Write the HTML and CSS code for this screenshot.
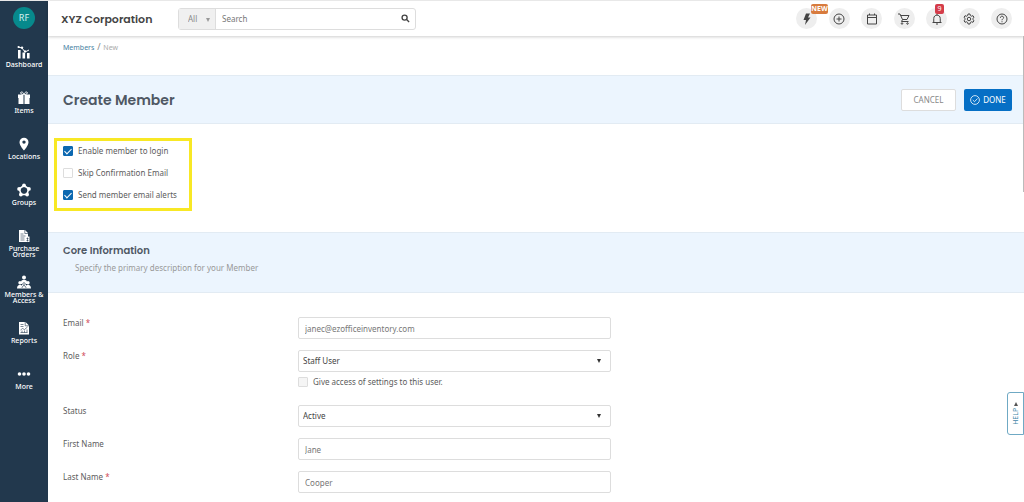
FILE: index.html
```html
<!DOCTYPE html>
<html lang="en">
<head>
    <meta charset="UTF-8">
    <meta name="viewport" content="width=device-width, initial-scale=1.0">
    <title>Create Member</title>
    <link rel="stylesheet" href="styles.css">
</head>
<body>
    <nav class="sidebar">
        <a href="#" class="avatar">RF</a>
        <a href="#" class="nav-item">
            <svg viewBox="0 0 14 14"><path d="M1 2l4 1 3 4 4-2" fill="none" stroke="currentColor"/><circle cx="1.6" cy="2" r="1.1"/><circle cx="5" cy="2.6" r="1.2"/><circle cx="8" cy="6.4" r="1.1"/><path d="M1 5h2.6v8.500H1zM5.500 7.500h2.600v6H5.500zM10 8h2.600v5.500H10z"/></svg>
            Dashboard
        </a>
        <a href="#" class="nav-item">
            <svg viewBox="0 0 14 14"><path d="M1 3.500h5.500V7H1zM7.500 3.500H13V7H7.500zM1.500 7h5v6h-5zM7.500 7h5v6h-5z"/><path d="M6.800 3.500C3 3.500 3 1 4.500 1S6.800 2.500 7 3.500C7.200 2.500 8 1 9.500 1S11 3.500 7.200 3.500" fill="none" stroke="currentColor"/></svg>
            Items
        </a>
        <a href="#" class="nav-item">
            <svg viewBox="0 0 14 14"><path fill-rule="evenodd" d="M7 .7a4.500 4.500 0 0 0-4.500 4.500C2.500 8.500 7 13.500 7 13.500s4.500-5 4.500-8.300A4.500 4.500 0 0 0 7 .7zm0 2.700a1.700 1.700 0 1 1 0 3.400 1.700 1.700 0 0 1 0-3.400z"/></svg>
            Locations
        </a>
        <a href="#" class="nav-item">
            <svg viewBox="0 0 14 14"><path d="M7 2.500l4.700 3.400-1.800 5.600H4.100L2.300 5.900z" fill="none" stroke="currentColor" stroke-width="1.600"/><circle cx="7" cy="2.400" r="1.900"/><circle cx="11.900" cy="5.900" r="1.900"/><circle cx="10.100" cy="11.500" r="1.900"/><circle cx="3.900" cy="11.500" r="1.900"/><circle cx="2.100" cy="5.900" r="1.900"/></svg>
            Groups
        </a>
        <a href="#" class="nav-item">
            <svg viewBox="0 0 14 14"><path d="M2 1h6l3 3v3.500h1.500V13H2z"/><path d="M7.800 1v3.500H11M3.500 5h3M3.500 7h5M3.500 9h4M3.500 11h4M10.500 8.500v4M9.500 9.500h2M9.500 11.500h2" class="ink"/></svg>
            Purchase Orders
        </a>
        <a href="#" class="nav-item">
            <svg viewBox="0 0 14 14"><circle cx="7" cy="2.400" r="2"/><path d="M4 9V7c0-3 6-3 6 0v2z"/><circle cx="3" cy="7.800" r="1.700"/><circle cx="11" cy="7.800" r="1.700"/><path d="M0 13.500c0-5 6-5 6 0zM8 13.500c0-5 6-5 6 0zM5 13.500V9h4v4.500z"/><circle cx="7" cy="9" r="1.300" class="ink"/><path d="M5 13c0-3 4-3 4 0" class="ink"/></svg>
            Members &amp; Access
        </a>
        <a href="#" class="nav-item">
            <svg viewBox="0 0 14 14"><path d="M2 1h6.500L12 4.500V13.500H2z"/><path d="M8.200 1v3.800H12M3.500 3.500h3M3.500 5.500h3M3.500 9l2-1.500 2 1L10.500 6M3.500 11.500h7M5 9.500v2M7.500 9.500v2M10 8.500v3" class="ink"/></svg>
            Reports
        </a>
        <a href="#" class="nav-item">
            <svg viewBox="0 0 14 14"><circle cx="2.500" cy="7" r="1.800"/><circle cx="7" cy="7" r="1.800"/><circle cx="11.500" cy="7" r="1.800"/></svg>
            More
        </a>
    </nav>

    <div class="page">
        <header class="topbar">
            <div class="company">XYZ Corporation</div>
            <form class="search">
                <span class="select scope">
                    <select aria-label="Search in"><option>All</option></select>
                </span>
                <input type="search" placeholder="Search" aria-label="Search">
                <button type="submit" aria-label="Go">
                    <svg viewBox="0 0 10 10"><circle cx="4" cy="4" r="2.800"/><path d="M6.200 6.200L9 9"/></svg>
                </button>
            </form>
            <div class="tools">
                <button type="button" aria-label="What's new"><svg viewBox="0 0 24 24"><path d="M10 1h8l-4 8h5L8 24l2-10H5z" fill="currentColor" stroke="none"/></svg><span class="badge new">NEW</span></button>
                <button type="button" aria-label="Add"><svg viewBox="0 0 24 24"><circle cx="12" cy="12" r="10"/><path d="M12 7v10M7 12h10"/></svg></button>
                <button type="button" aria-label="Calendar"><svg viewBox="0 0 24 24"><path d="M3 4h18v18H3zM3 9h18M7 1v3M17 1v3"/></svg></button>
                <button type="button" aria-label="Cart"><svg viewBox="0 0 24 24"><path d="M0 2h4l5 11h9l4-8H5.500M9 13l-2 4h14"/><circle cx="8" cy="21" r="1.500"/><circle cx="19" cy="21" r="1.500"/></svg></button>
                <button type="button" aria-label="Notifications"><svg viewBox="0 0 24 24"><path d="M3 19h18M5.500 19v-8c0-9 13-9 13 0v8M12 2v2M10 22h4"/></svg><span class="badge count">9</span></button>
                <button type="button" aria-label="Settings"><svg viewBox="0 0 24 24"><path d="M10 2h4l.6 3 2.400 1.400 3-1 2 3.400L19.700 11v2l2.300 2.200-2 3.400-3-1-2.400 1.400-.6 3h-4l-.6-3L7 17.600l-3 1-2-3.400L4.300 13v-2L2 8.800l2-3.400 3 1L9.400 5z"/><circle cx="12" cy="12" r="3.500"/></svg></button>
                <button type="button" aria-label="Help"><svg viewBox="0 0 24 24"><circle cx="12" cy="12" r="10"/><path d="M8.800 9.500c0-4.500 6.400-4 6.400-.3 0 2.500-3.200 2.600-3.200 5.300M12 16.500v2"/></svg></button>
            </div>
        </header>

        <main>
            <div class="breadcrumb"><a href="#">Members</a> <span>/</span> New</div>

            <form id="memberForm">
                <div class="band title-band">
                    <h1>Create Member</h1>
                    <button type="button" class="btn cancel-btn">CANCEL</button>
                    <button type="submit" class="btn done-btn">
                        <svg viewBox="0 0 10 10"><circle cx="5" cy="5" r="4.400"/><path d="M2.800 5l1.700 1.700 3-3.200"/></svg>
                        DONE
                    </button>
                </div>

                <div class="options">
                    <label class="check"><input type="checkbox" checked> Enable member to login</label>
                    <label class="check"><input type="checkbox"> Skip Confirmation Email</label>
                    <label class="check"><input type="checkbox" checked> Send member email alerts</label>
                </div>

                <div class="band section-band">
                    <h2>Core Information</h2>
                    <p>Specify the primary description for your Member</p>
                </div>

                <div class="fields">
                    <div class="form-group">
                        <label for="email">Email <span class="required">*</span></label>
                        <input type="email" id="email" value="janec@ezofficeinventory.com">
                    </div>
                    <div class="form-group">
                        <label for="role">Role <span class="required">*</span></label>
                        <div>
                            <span class="select"><select id="role"><option>Staff User</option></select></span>
                            <label class="check settings"><input type="checkbox" disabled> Give access of settings to this user.</label>
                        </div>
                    </div>
                    <div class="form-group">
                        <label for="status">Status</label>
                        <span class="select"><select id="status"><option>Active</option></select></span>
                    </div>
                    <div class="form-group">
                        <label for="firstName">First Name</label>
                        <input type="text" id="firstName" value="Jane">
                    </div>
                    <div class="form-group">
                        <label for="lastName">Last Name <span class="required">*</span></label>
                        <input type="text" id="lastName" value="Cooper">
                    </div>
                </div>
            </form>
        </main>
    </div>

    <div class="scroll-thumb"></div>
    <button type="button" class="help-tab">HELP <svg viewBox="0 0 4 4"><path d="M0 4l2-4 2 4z"/></svg></button>
</body>
</html>
```
FILE: styles.css
```css
* {
    box-sizing: border-box;
}

body {
    display: flex;
    min-height: 100vh;
    margin: 0;
    border-top: 1px solid #e8e8e8;
    background-color: #fff;
    color: #5c5c5c;
    font-family: "Noto Sans", sans-serif;
    font-size: 8px;
    line-height: 12px;
}

a {
    text-decoration: none;
}

button,
input,
select {
    font: inherit;
    color: inherit;
}

button {
    cursor: pointer;
}

/* Sidebar */
.sidebar {
    display: flex;
    flex-direction: column;
    align-items: center;
    flex: none;
    width: 48px;
    padding-top: 6px;
    background-color: #22384d;
}

.avatar {
    width: 22px;
    height: 22px;
    margin-bottom: 16px;
    border-radius: 50%;
    background-color: #07898c;
    color: #d5f2f1;
    font-size: 9px;
    line-height: 22px;
    text-align: center;
}

.nav-item {
    display: flex;
    flex-direction: column;
    align-items: center;
    gap: 3px;
    width: 48px;
    height: 46px;
    color: #fff;
    font-size: 7px;
    font-weight: 500;
    line-height: 6px;
    text-align: center;
}

.nav-item svg {
    width: 14px;
    height: 14px;
    fill: currentColor;
}

.nav-item .ink {
    fill: none;
    stroke: #22384d;
    stroke-width: 0.6px;
}

/* Top bar */
.page {
    flex: 1;
    min-width: 0;
}

.topbar {
    display: flex;
    align-items: center;
    height: 35px;
    padding: 0 12px 0 13px;
    box-shadow: 0 1px 3px rgba(0, 0, 0, 0.2);
}

.company {
    width: 117px;
    color: #444;
    font-family: Poppins, Inter, sans-serif;
    font-size: 11px;
    font-weight: 600;
}

.search {
    display: flex;
    width: 238px;
    height: 22px;
    border: 1px solid #ddd;
    border-radius: 3px;
}

.search .scope {
    width: 37px;
    border-right: 1px solid #ddd;
    background-color: #f0f0f0;
    color: #888;
}

.search .scope select {
    height: 20px;
    padding: 0 9px;
    border: 0;
    background: none;
    color: #888;
}

.search input {
    flex: 1;
    min-width: 0;
    padding: 0 6px;
    border: 0;
}

.search input::placeholder {
    color: #777;
}

.search button {
    display: flex;
    align-items: center;
    padding: 0 5px;
    border: 0;
    background: none;
}

.search svg {
    width: 9px;
    height: 9px;
    fill: none;
    stroke: #444;
    stroke-width: 1.5px;
}

.tools {
    display: flex;
    justify-content: space-between;
    width: 216px;
    margin-left: auto;
}

.tools button {
    position: relative;
    display: flex;
    align-items: center;
    justify-content: center;
    width: 21px;
    height: 21px;
    padding: 0;
    border: 0;
    border-radius: 50%;
    background-color: #eee;
    color: #444;
}

.tools svg {
    width: 12px;
    height: 12px;
    fill: none;
    stroke: currentColor;
    stroke-width: 2px;
}

.badge {
    position: absolute;
    top: -4px;
    border-radius: 2px;
    color: #fff;
    font-size: 7px;
    line-height: 10px;
    text-align: center;
}

.new {
    left: 15px;
    width: 17px;
    background-color: #d87b3e;
    font-weight: 700;
}

.count {
    left: 9px;
    width: 9px;
    background-color: #d43c49;
}

/* Page content */
.breadcrumb {
    height: 39px;
    padding: 5px 15px;
    color: #aaa;
    font-size: 7px;
}

.breadcrumb a {
    color: #48819f;
}

.breadcrumb span {
    margin: 0 1px;
    color: #888;
    font-size: 9px;
}

.band {
    border: solid #e2ebf3;
    border-width: 1px 0;
    background-color: #ecf5fe;
}

h1,
h2 {
    margin: 0;
    color: #4f5864;
    font-family: Poppins, Inter, sans-serif;
    font-weight: 600;
}

.title-band {
    display: flex;
    align-items: center;
    gap: 8px;
    height: 49px;
    padding: 0 12px 0 15px;
}

h1 {
    margin-right: auto;
    font-size: 14px;
    line-height: 20px;
}

.btn {
    display: flex;
    align-items: center;
    justify-content: center;
    gap: 3px;
    height: 22px;
    border-radius: 2px;
}

.cancel-btn {
    width: 55px;
    border: 1px solid #ddd;
    background-color: #fff;
    color: #888;
}

.done-btn {
    width: 48px;
    padding: 0;
    border: 0;
    background-color: #066fc5;
    color: #fff;
}

.done-btn svg {
    width: 10px;
    height: 10px;
    fill: none;
    stroke: currentColor;
    stroke-width: 0.8px;
}

.options {
    display: flex;
    flex-direction: column;
    gap: 10px;
    width: 138px;
    margin: 14px 6px 21px;
    padding: 4px 6px 7px;
    border: 3px solid #f8e825;
}

.check {
    display: flex;
    align-items: center;
    gap: 5px;
}

.check input {
    display: flex;
    justify-content: center;
    width: 10px;
    height: 10px;
    margin: 0;
    border: 1px solid #ddd;
    border-radius: 1px;
    background-color: #fff;
    appearance: none;
}

.check input:checked {
    border-color: #0c68b0;
    background-color: #0c68b0;
}

.check input:checked::after {
    content: "";
    width: 3px;
    height: 6px;
    border: solid #fff;
    border-width: 0 1px 1px 0;
    transform: rotate(45deg);
}

.check input:disabled {
    background-color: #f5f5f5;
}

.section-band {
    height: 61px;
    padding: 11px 15px;
}

h2 {
    font-size: 10px;
    line-height: 14px;
}

.section-band p {
    margin: 4px 12px;
    color: #999;
}

/* Form */
.fields {
    display: flex;
    flex-direction: column;
    gap: 11px;
    padding: 24px 12px 10px 15px;
}

.form-group {
    display: grid;
    grid-template-columns: 235px 33%;
    align-items: start;
}

.form-group > input,
.select select {
    width: 100%;
    height: 22px;
    padding: 0 6px;
    border: 1px solid #ddd;
    border-radius: 2px;
    background-color: #fff;
    color: #777;
}

.select {
    position: relative;
    display: block;
}

.select select {
    padding: 0 4px;
    color: #444;
    appearance: none;
}

.select::after {
    content: "";
    position: absolute;
    top: 9px;
    right: 10px;
    border: solid transparent;
    border-width: 4px 2px 0;
    border-top-color: #333;
}

.search .scope::after {
    right: 5px;
    border-top-color: #999;
}

.settings {
    margin: 4px 0 6px;
}

.required {
    color: #d04a5a;
}

.scroll-thumb {
    position: fixed;
    top: 36px;
    right: 0;
    width: 1px;
    height: 31%;
    background-color: #bbb;
}

.help-tab {
    position: fixed;
    top: 392px;
    right: 0;
    width: 17px;
    height: 43px;
    padding: 0;
    border: 1px solid #6fa9c4;
    border-radius: 3px 0 0 3px;
    background-color: #fff;
    color: #3e87a8;
    font-size: 7px;
    line-height: 15px;
    writing-mode: sideways-lr;
}

.help-tab svg {
    width: 4px;
    height: 4px;
    fill: #555;
}
```
